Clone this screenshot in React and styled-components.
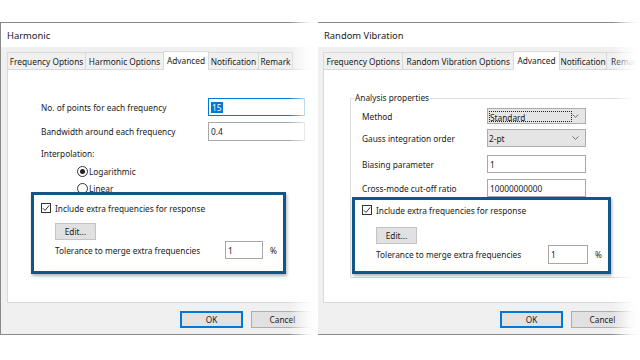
import React from 'react';
import styled, { createGlobalStyle } from 'styled-components';

const GlobalStyle = createGlobalStyle`
  html, body {
    margin: 0;
    padding: 0;
    background: #fff;
    overflow: hidden;
  }
  body {
    font-family: "Noto Sans", "Open Sans", sans-serif;
    font-size: 8.3px;
    color: #1b1b1b;
  }
`;

const leftTabs = [
  { label: 'Frequency Options', w: 79 },
  { label: 'Harmonic Options', w: 79 },
  { label: 'Advanced', w: 46 },
  { label: 'Notification', w: 51 },
  { label: 'Remark', w: 35 },
];

const rightTabs = [
  { label: 'Frequency Options', w: 81 },
  { label: 'Random Vibration Options', w: 113 },
  { label: 'Advanced', w: 47 },
  { label: 'Notification', w: 49 },
  { label: 'Remark', w: 40 },
];

const Check = () => (
  <CheckBox>
    <svg width="8" height="8" viewBox="0 0 8 8">
      <polyline points="0.8,4.2 3,6.4 7.2,1.4" fill="none" stroke="#333" strokeWidth="1" />
    </svg>
  </CheckBox>
);

const Chevron = () => (
  <svg width="7" height="4" viewBox="0 0 7 4">
    <polyline points="0.5,0.5 3.5,3.3 6.5,0.5" fill="none" stroke="#666" strokeWidth="0.9" />
  </svg>
);

const Dialog = ({ title, width, tabs, active, panelInset, footerInset, fadeFrom, children }) => (
  <Frame $width={width}>
    <TitleBar>{title}</TitleBar>
    <Body>
      <TabStrip $inset={panelInset}>
        {tabs.map((t) => (
          <Tab key={t.label} $w={t.w} $active={t.label === active}>
            {t.label}
          </Tab>
        ))}
      </TabStrip>
      <Panel $inset={panelInset}>{children}</Panel>
      <Footer $inset={footerInset}>
        <Button $primary>OK</Button>
        <Button>Cancel</Button>
      </Footer>
    </Body>
    <Fade $from={fadeFrom} />
  </Frame>
);

const ExtraFrequencies = ({ w, h, left, top, checkPad, padTop, editGap, labelW, inputW, inputH }) => (
  <Highlight $w={w} $h={h} $left={left} $top={top} $padTop={padTop} $checkPad={checkPad}>
    <CheckRow>
      <Check />
      <span>Include extra frequencies for response</span>
    </CheckRow>
    <EditButton $gap={editGap}>Edit...</EditButton>
    <ToleranceRow $labelW={labelW}>
      <span>Tolerance to merge extra frequencies</span>
      <Field $w={inputW} $h={inputH}>1</Field>
      <Percent>%</Percent>
    </ToleranceRow>
  </Highlight>
);

const App = () => (
  <>
    <GlobalStyle />
    <Page>
      <Dialog
        title="Harmonic"
        width={317}
        tabs={leftTabs}
        active="Advanced"
        panelInset={6}
        footerInset={179}
        fadeFrom={288}
      >
        <FormRow $pad={33} $labelW={167} $top={28}>
          <span>No. of points for each frequency</span>
          <Field $w={97} $h={18} $focused>
            <Selected>15</Selected>
          </Field>
        </FormRow>
        <FormRow $pad={33} $labelW={167} $top={6}>
          <span>Bandwidth around each frequency</span>
          <Field $w={97} $h={19}>0.4</Field>
        </FormRow>
        <PlainLabel $pad={33} $top={7}>Interpolation:</PlainLabel>
        <RadioRow $pad={69} $top={5}>
          <Radio $on />
          <span>Logarithmic</span>
        </RadioRow>
        <RadioRow $pad={69} $top={5}>
          <Radio />
          <span>Linear</span>
        </RadioRow>
        <ExtraFrequencies
          w={255}
          h={82}
          left={23}
          top={-2}
          checkPad={7}
          padTop={8}
          editGap={10}
          labelW={170}
          inputW={38}
          inputH={18}
        />
      </Dialog>

      <Dialog
        title="Random Vibration"
        width={330}
        tabs={rightTabs}
        active="Advanced"
        panelInset={5}
        footerInset={182}
        fadeFrom={294}
      >
        <Group>
          <legend>Analysis properties</legend>
          <FormRow $pad={11} $labelW={125} $top={4}>
            <span>Method</span>
            <Select $h={16}>
              <FocusText>Standard</FocusText>
              <Chevron />
            </Select>
          </FormRow>
          <FormRow $pad={11} $labelW={125} $top={5}>
            <span>Gauss integration order</span>
            <Select $h={18}>
              <span>2-pt</span>
              <Chevron />
            </Select>
          </FormRow>
          <FormRow $pad={11} $labelW={125} $top={8}>
            <span>Biasing parameter</span>
            <Field $w={99} $h={18}>1</Field>
          </FormRow>
          <FormRow $pad={11} $labelW={125} $top={6}>
            <span>Cross-mode cut-off ratio</span>
            <Field $w={99} $h={18}>10000000000</Field>
          </FormRow>
          <ExtraFrequencies
            w={259}
            h={77}
            left={1}
            top={0}
            checkPad={7}
            padTop={5}
            editGap={12}
            labelW={172}
            inputW={40}
            inputH={19}
          />
        </Group>
      </Dialog>
    </Page>
  </>
);

const Page = styled.div`
  width: 640px;
  height: 360px;
  padding-top: 22px;
  box-sizing: border-box;
  display: flex;
  overflow: hidden;
`;

const Frame = styled.div`
  position: relative;
  flex: none;
  width: ${(p) => p.$width}px;
  height: 313px;
  box-sizing: border-box;
  border: 1px solid #8a8a8a;
  background: #f0f0f0;
  display: flex;
  flex-direction: column;
`;

const TitleBar = styled.div`
  height: 24px;
  background: #fff;
  padding-left: 6px;
  display: flex;
  align-items: center;
  font-size: 9.4px;
  color: #222;
`;

const Body = styled.div`
  flex: 1;
  display: flex;
  flex-direction: column;
`;

const TabStrip = styled.div`
  height: 22px;
  display: flex;
  align-items: flex-end;
  padding-left: ${(p) => p.$inset}px;
`;

const Tab = styled.div`
  position: relative;
  z-index: ${(p) => (p.$active ? 2 : 1)};
  width: ${(p) => p.$w}px;
  height: ${(p) => (p.$active ? 19 : 17)}px;
  margin-left: -1px;
  margin-bottom: ${(p) => (p.$active ? -1 : 0)}px;
  box-sizing: border-box;
  border: 1px solid #d9d9d9;
  border-bottom: none;
  background: ${(p) => (p.$active ? '#fff' : '#f0f0f0')};
  display: flex;
  align-items: center;
  justify-content: center;
  padding-bottom: ${(p) => (p.$active ? 2 : 0)}px;
  white-space: nowrap;
  overflow: hidden;
  &:first-child {
    margin-left: 0;
  }
`;

const Panel = styled.div`
  height: 234px;
  box-sizing: border-box;
  margin-left: ${(p) => p.$inset}px;
  background: #fff;
  border: 1px solid #d9d9d9;
  border-right: none;
  display: flex;
  flex-direction: column;
  align-items: flex-start;
`;

const Footer = styled.div`
  flex: 1;
  display: flex;
  gap: 8px;
  padding: 8px 0 0 ${(p) => p.$inset}px;
`;

const Button = styled.div`
  flex: none;
  width: 63px;
  height: 17px;
  box-sizing: border-box;
  background: #e1e1e1;
  border: 1px solid ${(p) => (p.$primary ? '#0078d7' : '#adadad')};
  box-shadow: ${(p) => (p.$primary ? 'inset 0 0 0 1px #0078d7' : 'none')};
  display: flex;
  align-items: center;
  justify-content: center;
`;

const Fade = styled.div`
  position: absolute;
  z-index: 5;
  top: -2px;
  bottom: -2px;
  left: ${(p) => p.$from}px;
  right: -2px;
  background: linear-gradient(to right, rgba(255, 255, 255, 0) 0, rgba(255, 255, 255, 0.85) 18px, #fff 26px);
`;

const FormRow = styled.div`
  display: grid;
  grid-template-columns: ${(p) => p.$labelW}px auto;
  align-items: center;
  margin-top: ${(p) => p.$top}px;
  padding-left: ${(p) => p.$pad}px;
`;

const PlainLabel = styled.div`
  height: 12px;
  line-height: 12px;
  margin-top: ${(p) => p.$top}px;
  padding-left: ${(p) => p.$pad}px;
`;

const RadioRow = styled.div`
  height: 12px;
  display: flex;
  align-items: center;
  gap: 1px;
  margin-top: ${(p) => p.$top}px;
  padding-left: ${(p) => p.$pad}px;
`;

const Radio = styled.span`
  width: 11px;
  height: 11px;
  box-sizing: border-box;
  border-radius: 50%;
  border: 1px solid #333;
  background: #fff;
  display: flex;
  align-items: center;
  justify-content: center;
  &::after {
    content: '';
    width: 5px;
    height: 5px;
    border-radius: 50%;
    background: ${(p) => (p.$on ? '#222' : 'transparent')};
  }
`;

const Field = styled.div`
  width: ${(p) => p.$w}px;
  height: ${(p) => p.$h}px;
  box-sizing: border-box;
  border: 1px solid ${(p) => (p.$focused ? '#0078d7' : '#a8a8a8')};
  background: #fff;
  padding-left: 2px;
  display: flex;
  align-items: center;
`;

const Selected = styled.span`
  background: #0078d7;
  color: #fff;
  line-height: 11px;
  padding: 0 1px;
`;

const Select = styled.div`
  width: 99px;
  height: ${(p) => p.$h}px;
  box-sizing: border-box;
  border: 1px solid #adadad;
  background: #e5e5e5;
  display: flex;
  align-items: center;
  justify-content: space-between;
  padding: 0 6px 0 1px;
`;

const FocusText = styled.span`
  width: 84px;
  height: 11px;
  line-height: 11px;
  box-sizing: border-box;
  border: 1px dotted #222;
  padding-left: 0;
`;

const Group = styled.fieldset`
  align-self: stretch;
  margin: 22px 10px 0 26px;
  padding: 0 0 3px 0;
  border: 1px solid #dcdcdc;
  border-right: none;
  legend {
    margin-left: 3px;
    padding: 0 1px;
    line-height: 12px;
  }
`;

const Highlight = styled.div`
  position: relative;
  z-index: 3;
  width: ${(p) => p.$w}px;
  height: ${(p) => p.$h}px;
  box-sizing: border-box;
  margin-top: ${(p) => p.$top}px;
  margin-left: ${(p) => p.$left}px;
  padding: ${(p) => p.$padTop}px 0 0 ${(p) => p.$checkPad}px;
  border: 3px solid #0e5788;
  background: #fff;
  box-shadow: 1px 2px 3px rgba(0, 0, 0, 0.3);
  display: flex;
  flex-direction: column;
  align-items: flex-start;
`;

const CheckRow = styled.div`
  height: 10px;
  display: flex;
  align-items: center;
  gap: 4px;
`;

const CheckBox = styled.span`
  width: 10px;
  height: 10px;
  box-sizing: border-box;
  border: 1px solid #333;
  background: #fff;
  display: flex;
  align-items: center;
  justify-content: center;
`;

const EditButton = styled.div`
  width: 41px;
  height: 17px;
  box-sizing: border-box;
  margin: ${(p) => p.$gap}px 0 0 14px;
  background: #e1e1e1;
  border: 1px solid #c4c4c4;
  display: flex;
  align-items: center;
  justify-content: center;
`;

const ToleranceRow = styled.div`
  display: grid;
  grid-template-columns: ${(p) => p.$labelW}px auto auto;
  align-items: center;
  margin: 1px 0 0 14px;
`;

const Percent = styled.span`
  margin-left: 7px;
`;

export default App;
